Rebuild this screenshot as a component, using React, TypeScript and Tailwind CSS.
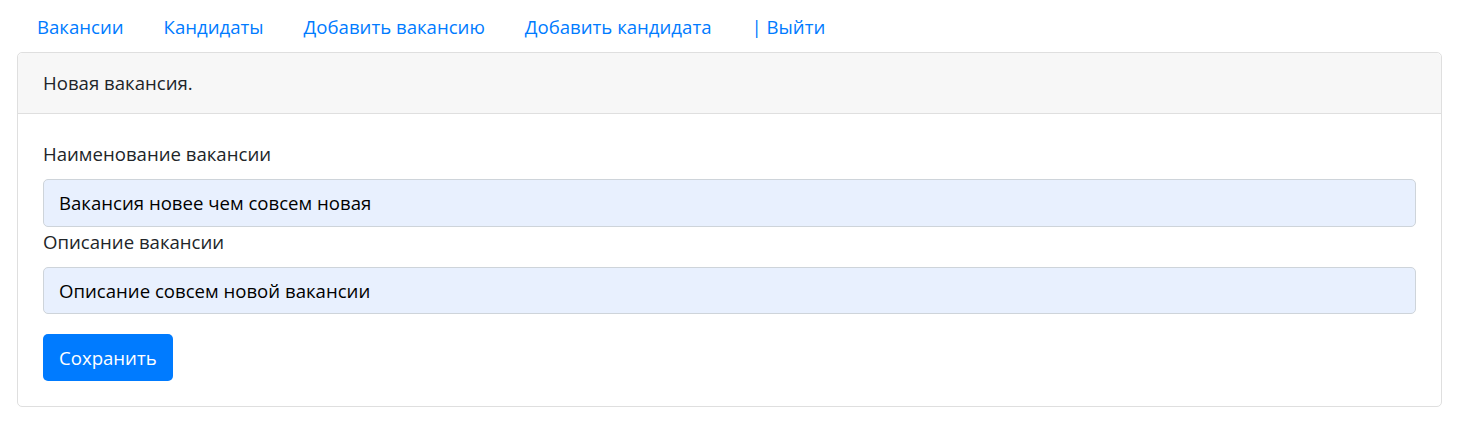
export default function App() {
    const links = ["Вакансии", "Кандидаты", "Добавить вакансию", "Добавить кандидата", "| Выйти"]

    return (
        <div className="min-h-[442px] bg-white text-[18.6px] leading-[30px] text-[#212529] font-['Open_Sans',sans-serif]">
            <div className="px-[17px] pt-[2px]">
                <ul className="flex">
                    {links.map((l) => (
                        <li key={l}>
                            <a href="#" className="block px-[20px] py-[10px] text-[#007bff]">{l}</a>
                        </li>
                    ))}
                </ul>

                <div className="w-[1425px] rounded-[5px] border border-[#dfdfdf]">
                    <div className="rounded-t-[5px] border-b border-[#dfdfdf] bg-[#f7f7f7] px-[25px] py-[15px]">
                        Новая вакансия.
                    </div>
                    <div className="p-[25px]">
                        <label className="mb-[10px] block">Наименование вакансии</label>
                        <input
                            className="block h-[47.5px] w-full rounded-[5px] border border-[#ced4da] bg-[#e8f0fe] px-[15px] text-[#000]"
                            defaultValue="Вакансия новее чем совсем новая"
                        />
                        <label className="mb-[10px] block">Описание вакансии</label>
                        <input
                            className="block h-[47.5px] w-full rounded-[5px] border border-[#ced4da] bg-[#e8f0fe] px-[15px] text-[#000]"
                            defaultValue="Описание совсем новой вакансии"
                        />
                        <button className="mt-[20px] h-[47px] rounded-[5px] bg-[#007bff] px-[16px] text-white">
                            Сохранить
                        </button>
                    </div>
                </div>
            </div>
        </div>
    )
}
